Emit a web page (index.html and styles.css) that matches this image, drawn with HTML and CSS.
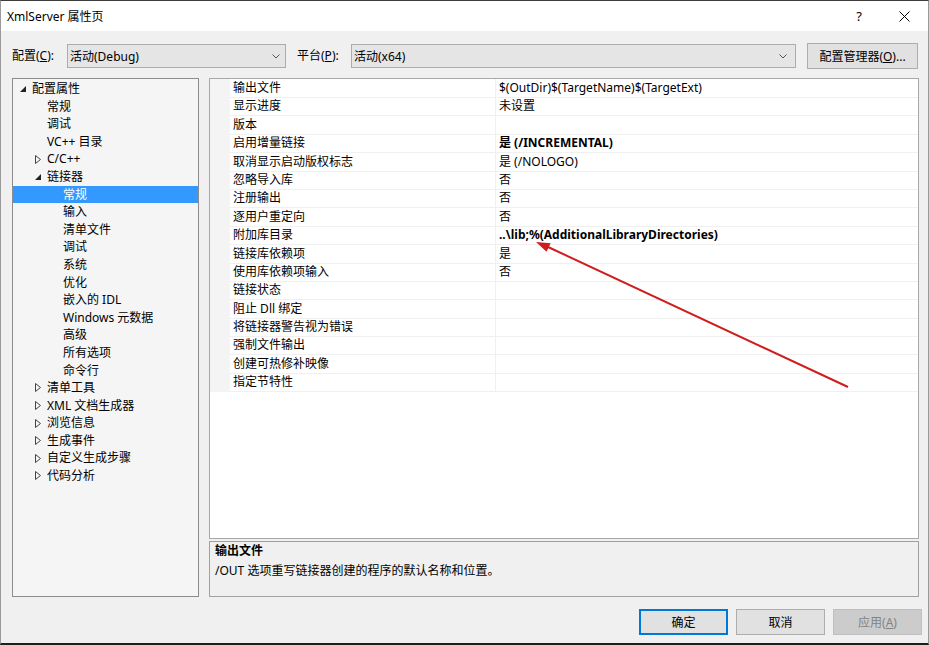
FILE: index.html
```html
<!DOCTYPE html>
<html lang="zh-CN">
<head>
  <meta charset="UTF-8" />
  <title>XmlServer 属性页</title>
  <link rel="stylesheet" href="styles.css">
</head>
<body>
  <div class="window">
    <div class="titlebar">
      <span class="title">XmlServer 属性页</span>
      <span class="help">?</span>
      <svg class="close" width="11" height="11" viewBox="0 0 11 11"><path d="M0.5 0.5 L10.5 10.5 M10.5 0.5 L0.5 10.5" stroke="#000" stroke-width="1" fill="none"/></svg>
    </div>

    <div class="config-row">
      <label class="lbl lbl-config">配置(<u>C</u>):</label>
      <div class="combo combo-config">
        <span>活动(Debug)</span>
        <svg class="chev" width="8" height="5" viewBox="0 0 8 5"><path d="M0.5 0.5 L4 4 L7.5 0.5" stroke="#555" fill="none"/></svg>
      </div>
      <label class="lbl lbl-platform">平台(<u>P</u>):</label>
      <div class="combo combo-platform">
        <span>活动(x64)</span>
        <svg class="chev" width="8" height="5" viewBox="0 0 8 5"><path d="M0.5 0.5 L4 4 L7.5 0.5" stroke="#555" fill="none"/></svg>
      </div>
      <button class="btn btn-manager">配置管理器(<u>O</u>)...</button>
    </div>

    <div class="panels">
      <div class="tree">
        <div class="node lv0"><span class="tw"><svg width="6" height="6" viewBox="0 0 6 6"><polygon points="0,6 6,6 6,0" fill="#222"/></svg></span>配置属性</div>
        <div class="node lv1"><span class="tw"></span>常规</div>
        <div class="node lv1"><span class="tw"></span>调试</div>
        <div class="node lv1"><span class="tw"></span>VC++ 目录</div>
        <div class="node lv1"><span class="tw"><svg width="6" height="9" viewBox="0 0 6 9"><polygon points="0.5,0.5 5.5,4.5 0.5,8.5" fill="none" stroke="#444"/></svg></span>C/C++</div>
        <div class="node lv1"><span class="tw"><svg width="6" height="6" viewBox="0 0 6 6"><polygon points="0,6 6,6 6,0" fill="#222"/></svg></span>链接器</div>
        <div class="node lv2 selected"><span class="tw"></span>常规</div>
        <div class="node lv2"><span class="tw"></span>输入</div>
        <div class="node lv2"><span class="tw"></span>清单文件</div>
        <div class="node lv2"><span class="tw"></span>调试</div>
        <div class="node lv2"><span class="tw"></span>系统</div>
        <div class="node lv2"><span class="tw"></span>优化</div>
        <div class="node lv2"><span class="tw"></span>嵌入的 IDL</div>
        <div class="node lv2"><span class="tw"></span>Windows 元数据</div>
        <div class="node lv2"><span class="tw"></span>高级</div>
        <div class="node lv2"><span class="tw"></span>所有选项</div>
        <div class="node lv2"><span class="tw"></span>命令行</div>
        <div class="node lv1"><span class="tw"><svg width="6" height="9" viewBox="0 0 6 9"><polygon points="0.5,0.5 5.5,4.5 0.5,8.5" fill="none" stroke="#444"/></svg></span>清单工具</div>
        <div class="node lv1"><span class="tw"><svg width="6" height="9" viewBox="0 0 6 9"><polygon points="0.5,0.5 5.5,4.5 0.5,8.5" fill="none" stroke="#444"/></svg></span>XML 文档生成器</div>
        <div class="node lv1"><span class="tw"><svg width="6" height="9" viewBox="0 0 6 9"><polygon points="0.5,0.5 5.5,4.5 0.5,8.5" fill="none" stroke="#444"/></svg></span>浏览信息</div>
        <div class="node lv1"><span class="tw"><svg width="6" height="9" viewBox="0 0 6 9"><polygon points="0.5,0.5 5.5,4.5 0.5,8.5" fill="none" stroke="#444"/></svg></span>生成事件</div>
        <div class="node lv1"><span class="tw"><svg width="6" height="9" viewBox="0 0 6 9"><polygon points="0.5,0.5 5.5,4.5 0.5,8.5" fill="none" stroke="#444"/></svg></span>自定义生成步骤</div>
        <div class="node lv1"><span class="tw"><svg width="6" height="9" viewBox="0 0 6 9"><polygon points="0.5,0.5 5.5,4.5 0.5,8.5" fill="none" stroke="#444"/></svg></span>代码分析</div>
      </div>

      <div class="right">
        <div class="grid">
          <div class="prop"><span class="gut"></span><span class="name">输出文件</span><span class="val">$(OutDir)$(TargetName)$(TargetExt)</span></div>
          <div class="prop"><span class="gut"></span><span class="name">显示进度</span><span class="val">未设置</span></div>
          <div class="prop"><span class="gut"></span><span class="name">版本</span><span class="val"></span></div>
          <div class="prop"><span class="gut"></span><span class="name">启用增量链接</span><span class="val bold">是 (/INCREMENTAL)</span></div>
          <div class="prop"><span class="gut"></span><span class="name">取消显示启动版权标志</span><span class="val">是 (/NOLOGO)</span></div>
          <div class="prop"><span class="gut"></span><span class="name">忽略导入库</span><span class="val">否</span></div>
          <div class="prop"><span class="gut"></span><span class="name">注册输出</span><span class="val">否</span></div>
          <div class="prop"><span class="gut"></span><span class="name">逐用户重定向</span><span class="val">否</span></div>
          <div class="prop"><span class="gut"></span><span class="name">附加库目录</span><span class="val bold">..\lib;%(AdditionalLibraryDirectories)</span></div>
          <div class="prop"><span class="gut"></span><span class="name">链接库依赖项</span><span class="val">是</span></div>
          <div class="prop"><span class="gut"></span><span class="name">使用库依赖项输入</span><span class="val">否</span></div>
          <div class="prop"><span class="gut"></span><span class="name">链接状态</span><span class="val"></span></div>
          <div class="prop"><span class="gut"></span><span class="name">阻止 Dll 绑定</span><span class="val"></span></div>
          <div class="prop"><span class="gut"></span><span class="name">将链接器警告视为错误</span><span class="val"></span></div>
          <div class="prop"><span class="gut"></span><span class="name">强制文件输出</span><span class="val"></span></div>
          <div class="prop"><span class="gut"></span><span class="name">创建可热修补映像</span><span class="val"></span></div>
          <div class="prop"><span class="gut"></span><span class="name">指定节特性</span><span class="val"></span></div>
        </div>
        <div class="desc">
          <div class="desc-title">输出文件</div>
          <div class="desc-text">/OUT 选项重写链接器创建的程序的默认名称和位置。</div>
        </div>
      </div>
    </div>

    <div class="button-row">
      <button class="btn btn-default">确定</button>
      <button class="btn">取消</button>
      <button class="btn btn-disabled">应用(<u>A</u>)</button>
    </div>

    <!-- red annotation arrow drawn over the dialog -->
    <svg class="annotation" width="929" height="645" viewBox="0 0 929 645">
      <line x1="848" y1="387" x2="547" y2="246.5" stroke="#cf1d1d" stroke-width="2"/>
      <polygon points="536,242 550.7,243.2 546.5,251.8" fill="#cf1d1d"/>
    </svg>
  </div>
</body>
</html>
```

FILE: styles.css
```css
body {
  margin: 0;
  padding: 0;
  background: #f0f0f0;
  font-family: "Noto Sans", "Noto Sans CJK SC", sans-serif;
  font-size: 12px;
  color: #000;
}

.window {
  position: relative;
  width: 929px;
  height: 645px;
  box-sizing: border-box;
  background: #f0f0f0;
  border-top: 1px solid #3c3c3c;
  border-bottom: 2px solid #1f1f1f;
  border-left: 1px solid #9a9a9a;
  border-right: 1px solid #9a9a9a;
  display: flex;
  flex-direction: column;
}

.titlebar {
  height: 30px;
  background: #fff;
  display: flex;
  align-items: center;
  padding: 0 0 0 6px;
}

.title {
  flex: 1;
  font-size: 12px;
}

.help {
  font-size: 13px;
  margin-right: 37px;
}

.close {
  margin-right: 18px;
}

.config-row {
  display: flex;
  align-items: center;
  height: 26px;
  margin: 12px 0 0 11px;
}

.lbl {
  display: block;
  line-height: 16px;
}

.lbl-config {
  width: 55px;
}

.lbl-platform {
  width: 54px;
  margin-left: 11px;
}

.combo {
  height: 24px;
  box-sizing: border-box;
  background: #e5e5e5;
  border: 1px solid #acacac;
  display: flex;
  align-items: center;
  padding-left: 2px;
}

.combo span {
  flex: 1;
}

.combo-config {
  width: 219px;
}

.combo-config .chev {
  margin-right: 5px;
}

.combo-platform {
  width: 445px;
}

.combo-platform .chev {
  margin-right: 8px;
}

.btn {
  font-family: inherit;
  font-size: 12px;
  color: #000;
  background: #e1e1e1;
  border: 1px solid #adadad;
  height: 26px;
  width: 89px;
  padding: 0;
  box-sizing: border-box;
}

.btn-manager {
  width: 111px;
  margin-left: 11px;
}

.panels {
  display: flex;
  height: 519px;
  margin: 9px 0 0 11px;
}

.tree {
  width: 187px;
  box-sizing: border-box;
  background: #f5f5f5;
  border: 1px solid #8c8c8c;
  padding-top: 1px;
}

.node {
  height: 17.6px;
  line-height: 17.6px;
  display: flex;
  align-items: center;
  white-space: nowrap;
}

.node .tw {
  width: 15px;
  height: 17px;
  display: flex;
  align-items: center;
  padding-left: 3px;
  box-sizing: border-box;
}

.lv0 {
  padding-left: 4px;
}

.lv1 {
  padding-left: 19px;
}

.lv2 {
  padding-left: 35px;
}

.selected {
  background: #3399ff;
  color: #fff;
}

.right {
  width: 710px;
  margin-left: 10px;
  display: flex;
  flex-direction: column;
}

.grid {
  height: 463px;
  box-sizing: border-box;
  background: #fff;
  border: 1px solid #a8a8a8;
}

.prop {
  display: grid;
  grid-template-columns: 20px 265px 1fr;
  height: 18.4px;
  line-height: 18px;
  white-space: nowrap;
}

.prop .gut {
  background: #f4f4f4;
}

.prop .name {
  padding-left: 3px;
  border-bottom: 1px solid #f0f0f0;
}

.prop .val {
  padding-left: 3px;
  border-left: 1px solid #f0f0f0;
  border-bottom: 1px solid #f0f0f0;
}

.bold {
  font-weight: bold;
}

.desc {
  margin-top: 2px;
  height: 56px;
  box-sizing: border-box;
  border: 1px solid #a0a0a0;
  background: #f0f0f0;
  padding: 0 5px;
}

.desc-title {
  font-weight: bold;
  line-height: 18px;
}

.desc-text {
  line-height: 20px;
  margin-top: 1px;
}

.button-row {
  display: flex;
  justify-content: flex-end;
  gap: 8px;
  margin: 12px 6px 0 0;
}

.btn-default {
  border: 2px solid #0078d7;
}

.btn-disabled {
  background: #cccccc;
  border-color: #bfbfbf;
  color: #838383;
}

.annotation {
  position: absolute;
  top: -1px;
  left: -1px;
  pointer-events: none;
}
```
